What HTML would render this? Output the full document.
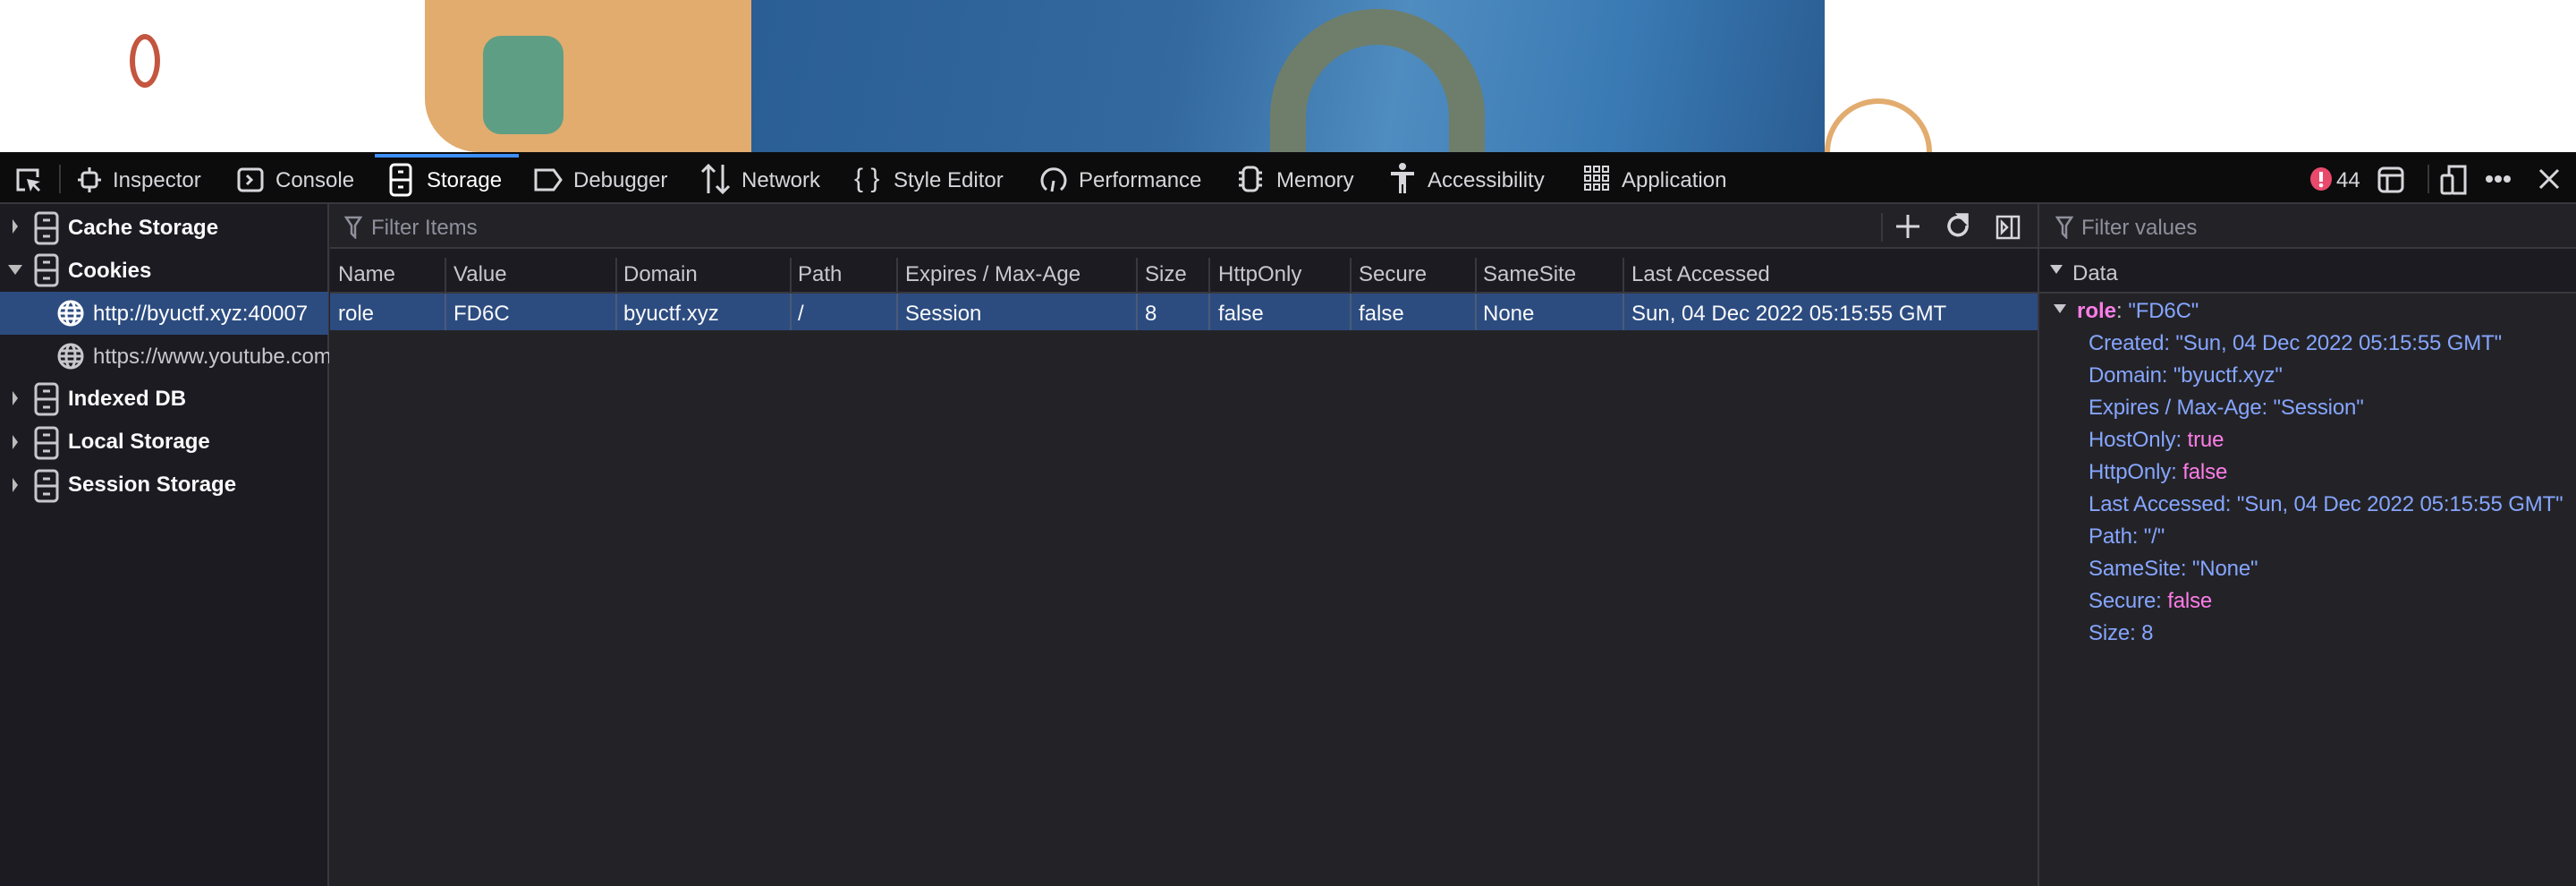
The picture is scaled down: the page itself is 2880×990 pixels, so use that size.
<!DOCTYPE html>
<html><head><meta charset="utf-8"><style>
*{box-sizing:border-box;margin:0;padding:0}
body{width:2880px;height:990px;overflow:hidden;background:#232327;font-family:"Liberation Sans",sans-serif;font-size:24px;color:#f9f9fa;position:relative}
.a{position:absolute;white-space:nowrap}
.g{color:#c8c8cc}
svg{position:absolute}
.tb{color:#d7d7db;top:188px !important}
.b{color:#86a5ff;letter-spacing:-0.15px}
.p{color:#ff7de9}
</style></head><body>
<!-- page images -->
<div class="a" style="left:0;top:0;width:2880px;height:170px;background:#fff"></div>
<div class="a" style="left:475px;top:0;width:365px;height:170px;background:#e2ac6e;border-radius:0 0 0 60px"></div>
<div class="a" style="left:540px;top:40px;width:90px;height:110px;background:#5e9e84;border-radius:20px"></div>
<div class="a" style="left:145px;top:38px;width:34px;height:60px;border:6px solid #c4553f;border-radius:50%"></div>
<div class="a" style="left:840px;top:0;width:1200px;height:170px;background:linear-gradient(100deg,#2a5e94 0%,#33699f 40%,#4f8cc0 60%,#3a7ab4 80%,#2a5d92 100%)"></div>
<div class="a" style="left:1420px;top:10px;width:240px;height:320px;border:40px solid #6f7e6a;border-radius:120px 120px 0 0;border-bottom:none"></div>
<div class="a" style="left:2040px;top:110px;width:120px;height:120px;border:6px solid #e2ac6e;border-radius:50%"></div>
<!-- toolbar -->
<div class="a" style="left:0;top:170px;width:2880px;height:58px;background:#0c0c0d;border-bottom:2px solid #38383d"></div>
<div class="a" style="left:419px;top:172px;width:161px;height:4px;background:#3d8ef5"></div>
<div class="a" style="left:66px;top:184px;width:2px;height:32px;background:#38383d"></div>
<div class="a" style="left:2714px;top:184px;width:2px;height:32px;background:#38383d"></div>
<svg style="left:16px;top:186px" width="30" height="30" viewBox="0 0 30 30" fill="none" stroke="#d7d7db" stroke-width="3"><path d="M12 26H4V4h22v8"/><path d="M14 14l4 14 3-6 6 6 2-2-6-6 6-3z" fill="#d7d7db" stroke="none"/></svg>
<svg style="left:86px;top:186px" width="28" height="30" viewBox="0 0 28 30" fill="none" stroke="#d7d7db" stroke-width="3"><rect x="6" y="7" width="16" height="16" rx="3"/><path d="M14 1v6M14 23v6M1 15h5M22 15h5"/></svg>
<div class="a tb" style="left:126px">Inspector</div>
<svg style="left:265px;top:186px" width="30" height="30" fill="none" stroke="#d7d7db" stroke-width="3"><rect x="2" y="3" width="26" height="24" rx="4"/><path d="M11 10l5 5-5 5"/></svg>
<div class="a tb" style="left:308px">Console</div>
<svg style="left:435px;top:182px" width="26" height="38" fill="none" stroke="#fff" stroke-width="3"><rect x="2" y="2" width="22" height="34" rx="4"/><path d="M2 19h22M10 10h6M10 27h6"/></svg>
<div class="a" style="left:477px;top:188px;color:#fff">Storage</div>
<svg style="left:597px;top:188px" width="32" height="26" fill="none" stroke="#d7d7db" stroke-width="3"><path d="M2 2h20l8 11-8 11H2z"/></svg>
<div class="a tb" style="left:641px">Debugger</div>
<svg style="left:783px;top:182px" width="34" height="36" fill="none" stroke="#d7d7db" stroke-width="3"><path d="M9 34V3M2 10l7-7 7 7M25 2v31M18 26l7 7 7-7"/></svg>
<div class="a tb" style="left:829px">Network</div>
<div class="a" style="left:955px;top:183px;font-size:30px;color:#d7d7db">{ }</div>
<div class="a tb" style="left:999px">Style Editor</div>
<svg style="left:1162px;top:184px" width="32" height="32" fill="none" stroke="#d7d7db" stroke-width="3"><path d="M8 28A13 13 0 1 1 24 28"/><path d="M14 30l2-12"/></svg>
<div class="a tb" style="left:1206px">Performance</div>
<svg style="left:1382px;top:184px" width="32" height="32" fill="none" stroke="#d7d7db" stroke-width="3"><rect x="8" y="3" width="16" height="26" rx="5"/><path d="M3 9h5M3 16h5M3 23h5M24 9h5M24 16h5M24 23h5"/></svg>
<div class="a tb" style="left:1427px">Memory</div>
<svg style="left:1553px;top:182px" width="30" height="36" fill="#d7d7db"><circle cx="15" cy="4" r="4"/><path d="M2 10h26v4h-9v20h-3v-10h-2v10h-3V14H2z"/></svg>
<div class="a tb" style="left:1596px">Accessibility</div>
<svg style="left:1770px;top:184px" width="30" height="30" fill="none" stroke="#d7d7db" stroke-width="2"><rect x="2" y="2" width="6" height="6"/><rect x="12" y="2" width="6" height="6"/><rect x="22" y="2" width="6" height="6"/><rect x="2" y="12" width="6" height="6"/><rect x="12" y="12" width="6" height="6"/><rect x="22" y="12" width="6" height="6"/><rect x="2" y="22" width="6" height="6"/><rect x="12" y="22" width="6" height="6"/><rect x="22" y="22" width="6" height="6"/></svg>
<div class="a tb" style="left:1813px">Application</div>
<svg style="left:2582px;top:186px" width="26" height="28"><ellipse cx="13" cy="14" rx="12" ry="13" fill="#e94a6c"/><rect x="11" y="6" width="4" height="11" fill="#fff"/><circle cx="13" cy="21" r="2.3" fill="#fff"/></svg>
<div class="a tb" style="left:2612px">44</div>
<svg style="left:2658px;top:186px" width="30" height="30" fill="none" stroke="#d7d7db" stroke-width="3"><rect x="2" y="2" width="26" height="26" rx="5"/><path d="M2 10h26M11 10v18"/></svg>
<svg style="left:2728px;top:184px" width="30" height="34" fill="none" stroke="#d7d7db" stroke-width="3"><rect x="2" y="12" width="12" height="20" rx="2"/><path d="M10 12V2h18v30H14"/></svg>
<svg style="left:2778px;top:194px" width="30" height="12" fill="#d7d7db"><circle cx="5" cy="6" r="4"/><circle cx="15" cy="6" r="4"/><circle cx="25" cy="6" r="4"/></svg>
<svg style="left:2838px;top:188px" width="24" height="24" stroke="#d7d7db" stroke-width="3"><path d="M2 2l20 20M22 2L2 22"/></svg>
<!-- sidebar -->
<div class="a" style="left:0;top:228px;width:368px;height:762px;background:#1c1b22;border-right:2px solid #38383d"></div>
<div class="a" style="left:0;top:326px;width:367px;height:48px;background:#2c4c80"></div>
<svg style="left:0;top:0" width="368" height="600" fill="none" stroke="#c8c8cc" stroke-width="3">
<path d="M14 245l6 8-6 8z" fill="#bbb" stroke="none"/>
<path d="M9 296l16 0-8 11z" fill="#bbb" stroke="none"/>
<path d="M14 437l6 8-6 8zM14 486l6 8-6 8zM14 534l6 8-6 8z" fill="#bbb" stroke="none"/>
<g><rect x="40" y="238" width="24" height="34" rx="4"/><path d="M40 255h24M48 246h8M48 264h8"/></g>
<g><rect x="40" y="285" width="24" height="34" rx="4"/><path d="M40 302h24M48 293h8M48 311h8"/></g>
<g><rect x="40" y="429" width="24" height="34" rx="4"/><path d="M40 446h24M48 437h8M48 455h8"/></g>
<g><rect x="40" y="478" width="24" height="34" rx="4"/><path d="M40 495h24M48 486h8M48 504h8"/></g>
<g><rect x="40" y="526" width="24" height="34" rx="4"/><path d="M40 543h24M48 535h8M48 552h8"/></g>
<g stroke="#fff"><circle cx="79" cy="350" r="13"/><ellipse cx="79" cy="350" rx="5" ry="13"/><path d="M66 350h26M68 344h22M68 356h22"/></g>
<g><circle cx="79" cy="398" r="13"/><ellipse cx="79" cy="398" rx="5" ry="13"/><path d="M66 398h26M68 392h22M68 404h22"/></g>
</svg>
<div class="a" style="left:76px;top:241px;font-weight:bold">Cache Storage</div>
<div class="a" style="left:76px;top:289px;font-weight:bold">Cookies</div>
<div class="a" style="left:104px;top:337px;color:#fff">http://byuctf.xyz:40007</div>
<div class="a g" style="left:104px;top:385px;width:264px;overflow:hidden">https://www.youtube.com</div>
<div class="a" style="left:76px;top:432px;font-weight:bold">Indexed DB</div>
<div class="a" style="left:76px;top:480px;font-weight:bold">Local Storage</div>
<div class="a" style="left:76px;top:528px;font-weight:bold">Session Storage</div>
<!-- table area -->
<div class="a" style="left:369px;top:228px;width:1909px;height:50px;background:#232327;border-bottom:2px solid #38383d"></div>
<svg style="left:385px;top:241px" width="20" height="26" fill="none" stroke="#8f8f9d" stroke-width="2.5"><path d="M2 2h16l-6 9v13l-4-4V11z"/></svg>
<div class="a" style="left:415px;top:241px;color:#8f8f9d">Filter Items</div>
<div class="a" style="left:2103px;top:238px;width:2px;height:32px;background:#38383d"></div>
<svg style="left:2118px;top:238px" width="30" height="30" stroke="#d7d7db" stroke-width="3"><path d="M15 2v26M2 15h26"/></svg>
<svg style="left:2174px;top:238px" width="30" height="30" fill="none" stroke="#d7d7db" stroke-width="3.5"><path d="M25 14A10 10 0 1 1 20 6"/><path d="M16 2h9v9z" fill="#d7d7db"/></svg>
<svg style="left:2231px;top:240px" width="28" height="28" fill="none" stroke="#d7d7db" stroke-width="2.5"><rect x="2" y="2" width="24" height="24"/><path d="M18 2v24M7 8l6 6-6 6z"/></svg>
<div class="a" style="left:369px;top:278px;width:1909px;height:50px;background:#1c1b22;border-bottom:2px solid #38383d"></div>
<div class="a" style="left:369px;top:328px;width:1909px;height:41px;background:#2c4c80"></div>
<div class="a" style="left:369px;top:369px;width:1909px;height:621px;background:#232327"></div>
<svg style="left:0;top:0" width="2880" height="370" stroke="#4a5a7a" stroke-width="2">
<g stroke="#38383d"><path d="M498 288v40M689 288v40M884 288v40M1003 288v40M1271 288v40M1352 288v40M1510 288v40M1650 288v40M1815 288v40"/></g>
<path d="M498 328v41M689 328v41M884 328v41M1003 328v41M1271 328v41M1352 328v41M1510 328v41M1650 328v41M1815 328v41"/>
</svg>
<div class="a g" style="left:378px;top:293px">Name</div>
<div class="a g" style="left:507px;top:293px">Value</div>
<div class="a g" style="left:697px;top:293px">Domain</div>
<div class="a g" style="left:892px;top:293px">Path</div>
<div class="a g" style="left:1012px;top:293px">Expires / Max-Age</div>
<div class="a g" style="left:1280px;top:293px">Size</div>
<div class="a g" style="left:1362px;top:293px">HttpOnly</div>
<div class="a g" style="left:1519px;top:293px">Secure</div>
<div class="a g" style="left:1658px;top:293px">SameSite</div>
<div class="a g" style="left:1824px;top:293px">Last Accessed</div>
<div class="a" style="left:378px;top:337px">role</div>
<div class="a" style="left:507px;top:337px">FD6C</div>
<div class="a" style="left:697px;top:337px">byuctf.xyz</div>
<div class="a" style="left:892px;top:337px">/</div>
<div class="a" style="left:1012px;top:337px">Session</div>
<div class="a" style="left:1280px;top:337px">8</div>
<div class="a" style="left:1362px;top:337px">false</div>
<div class="a" style="left:1519px;top:337px">false</div>
<div class="a" style="left:1658px;top:337px">None</div>
<div class="a" style="left:1824px;top:337px">Sun, 04 Dec 2022 05:15:55 GMT</div>
<!-- right panel -->
<div class="a" style="left:2278px;top:228px;width:2px;height:762px;background:#38383d"></div>
<div class="a" style="left:2280px;top:228px;width:600px;height:50px;border-bottom:2px solid #38383d"></div>
<svg style="left:2298px;top:241px" width="20" height="26" fill="none" stroke="#8f8f9d" stroke-width="2.5"><path d="M2 2h16l-6 9v13l-4-4V11z"/></svg>
<div class="a" style="left:2327px;top:241px;color:#8f8f9d">Filter values</div>
<div class="a" style="left:2280px;top:278px;width:600px;height:50px;background:#1c1b22;border-bottom:2px solid #38383d"></div>
<svg style="left:2290px;top:294px" width="20" height="14" fill="#c8c8cc"><path d="M2 2h14l-7 10z"/></svg>
<div class="a g" style="left:2317px;top:292px">Data</div>
<svg style="left:2294px;top:338px" width="20" height="14" fill="#c8c8cc"><path d="M2 2h14l-7 10z"/></svg>
<div class="a" style="left:2322px;top:334px"><span class="p" style="font-weight:bold">role</span><span class="g">: </span><span class="b">"FD6C"</span></div>
<div class="a b" style="left:2335px;top:370px">Created: "Sun, 04 Dec 2022 05:15:55 GMT"</div>
<div class="a b" style="left:2335px;top:406px">Domain: "byuctf.xyz"</div>
<div class="a b" style="left:2335px;top:442px">Expires / Max-Age: "Session"</div>
<div class="a b" style="left:2335px;top:478px">HostOnly: <span class="p">true</span></div>
<div class="a b" style="left:2335px;top:514px">HttpOnly: <span class="p">false</span></div>
<div class="a b" style="left:2335px;top:550px">Last Accessed: "Sun, 04 Dec 2022 05:15:55 GMT"</div>
<div class="a b" style="left:2335px;top:586px">Path: "/"</div>
<div class="a b" style="left:2335px;top:622px">SameSite: "None"</div>
<div class="a b" style="left:2335px;top:658px">Secure: <span class="p">false</span></div>
<div class="a b" style="left:2335px;top:694px">Size: 8</div>
</body></html>
